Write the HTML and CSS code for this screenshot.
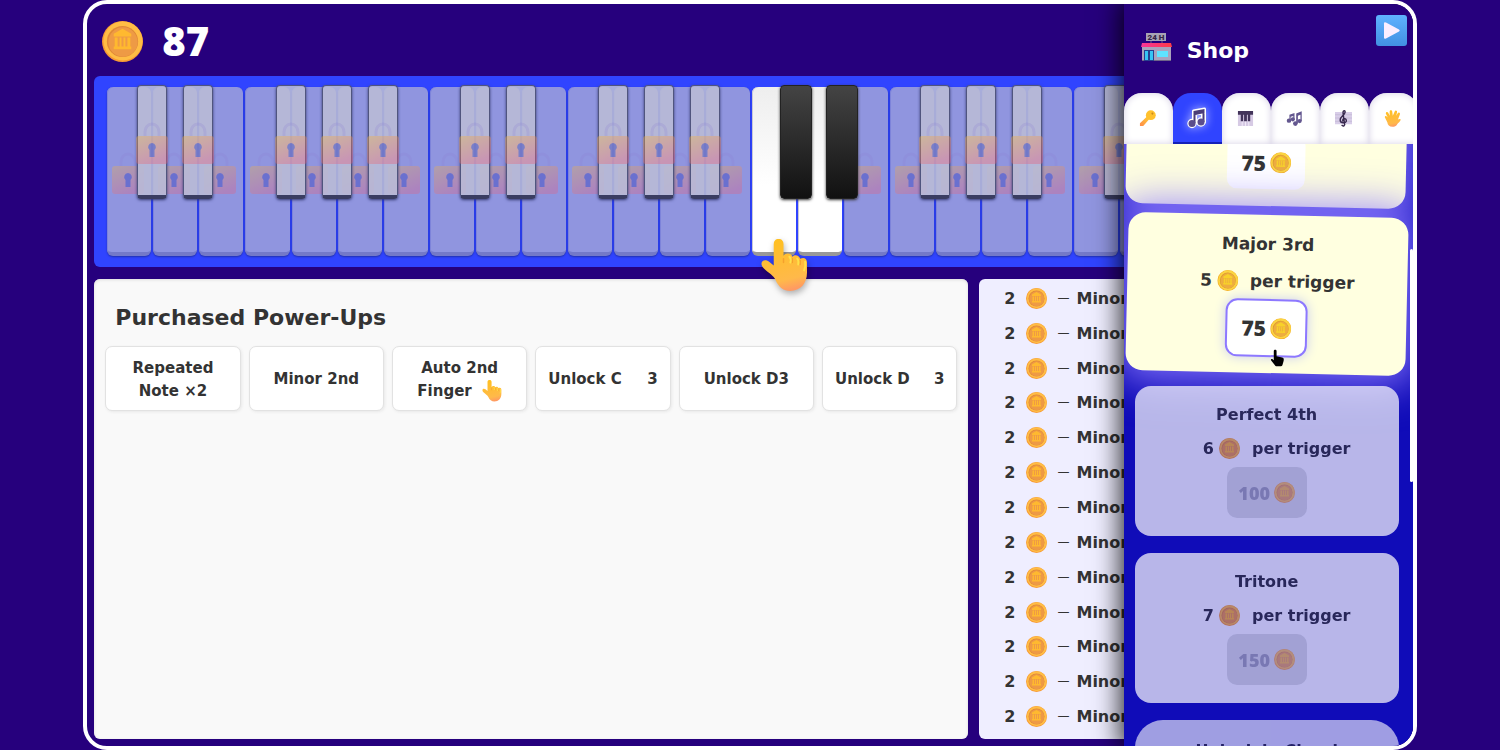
FILE: index.html
```html
<!DOCTYPE html>
<html lang="en">
<head>
<meta charset="utf-8">
<title>Piano Shop</title>
<link rel="stylesheet" href="styles.css">
</head>
<body>
<svg class="defs" aria-hidden="true">
  <defs>
    <linearGradient id="lockBody" x1="0" y1="0" x2="0.5" y2="1"><stop offset="0" stop-color="#f5b63d"/><stop offset="1" stop-color="#e8607e"/></linearGradient>
    <linearGradient id="skin" x1="0.3" y1="0" x2="0.5" y2="1"><stop offset="0" stop-color="#ffc020"/><stop offset="0.8" stop-color="#ffb94a"/><stop offset="1" stop-color="#ff9a62"/></linearGradient>
    <linearGradient id="keyMetal" x1="1" y1="0" x2="0" y2="1"><stop offset="0" stop-color="#ffd02e"/><stop offset="1" stop-color="#ff8a4d"/></linearGradient>
    <linearGradient id="roof" x1="0" y1="0" x2="1" y2="0"><stop offset="0" stop-color="#f8339a"/><stop offset="1" stop-color="#ff3b45"/></linearGradient>
    <linearGradient id="playBg" x1="0" y1="0" x2="0" y2="1"><stop offset="0" stop-color="#5fb2ff"/><stop offset="1" stop-color="#4290e2"/></linearGradient>
    <symbol id="coin" viewBox="0 0 42 42">
      <circle cx="21" cy="21" r="21" fill="#f79a35"/><circle cx="21.5" cy="20.5" r="20" fill="#ffbd45"/>
      <circle cx="21" cy="21" r="16" fill="#e08a38"/><circle cx="21.5" cy="21.5" r="15" fill="#ee9a45"/>
      <path fill="#ffb92f" d="M21 8 30 13V16H12V13ZM13 17h3v9h-3ZM18 17h2v9h-2ZM22 17h2v9h-2ZM26 17h3v9h-3ZM12 26h18v3H12Z"/>
    </symbol>
    <symbol id="lock" viewBox="0 0 32 42">
      <path d="M9 15V10a7 8 0 0 1 14 0v4" fill="none" stroke="#8b7bd0" stroke-opacity=".55" stroke-width="3"/>
      <rect y="14" width="32" height="28" rx="3" fill="url(#lockBody)"/>
      <path fill="#1b25b0" d="M16 21a4 4 0 0 1 2.500 7v7h-5v-7a4 4 0 0 1 2.500-7Z"/>
    </symbol>
    <symbol id="finger" viewBox="0 0 48 54">
      <path fill="url(#skin)" d="M13 5c0-7 10-7 10 0v12c2-3 8-3 9 1 3-3 7-1 8 2 4-2 7 0 7 4v10c0 12-7 19-17 19-7 0-12-4-15-11-2-5-7-7-12-12C-3 24 3 19 8 23l5 4Z"/>
      <path d="M23 20v4M32 20v4M40 22v4" stroke="#f5a12d" stroke-width="1.500" fill="none" stroke-linecap="round"/>
      <path d="M29 18q2 2 1 6M37 20q2 2 1 6M45 23q1 4-1 9" stroke="#ffe04a" stroke-width="2" fill="none" stroke-linecap="round"/>
    </symbol>
  </defs>
</svg>

<main class="frame">
  <section class="game">
    <header class="score">
      <svg class="score-coin"><use href="#coin"/></svg>
      <span class="score-value">87</span>
    </header>
    <div class="piano" id="piano"></div>
    <div class="panels">
      <section class="purchased">
        <h2 class="panel-title">Purchased Power-Ups</h2>
        <div class="tiles">
          <div class="tile">Repeated Note ×2</div>
          <div class="tile">Minor 2nd</div>
          <div class="tile"><span>Auto 2nd <span class="nowrap">Finger <svg class="tile-hand"><use href="#finger"/></svg></span></span></div>
          <div class="tile tile-wide"><span>Unlock C</span><span>3</span></div>
          <div class="tile">Unlock D3</div>
          <div class="tile tile-wide"><span>Unlock D</span><span>3</span></div>
        </div>
      </section>
      <ul class="history" id="history"></ul>
    </div>
  </section>

  <aside class="shop">
    <header class="shop-head">
      <svg class="shop-icon" viewBox="0 0 31 29">
        <path d="M10 8v3M21 8v3" stroke="#7a6088"/>
        <rect x="5" y="0" width="20" height="8" fill="#a7a3b5"/>
        <text x="15" y="7" class="sign">24 H</text>
        <rect x="1" y="13" width="29" height="15" fill="#a9a3bd"/>
        <path d="M1 27.500h29" stroke="#6f6488"/>
        <path d="M1 10h29l1 4H0Z" fill="url(#roof)"/>
        <rect x="3" y="17" width="10" height="11" fill="#26408f"/>
        <path d="M4 18h3v9H4ZM9 18h3v9H9Z" fill="#35c5f5"/>
        <rect x="16" y="18" width="11" height="6" fill="#5fe3ff"/>
      </svg>
      <h1 class="shop-title">Shop</h1>
      <button class="play" aria-label="Close shop">
        <svg viewBox="0 0 31 31"><rect width="31" height="31" rx="3" fill="url(#playBg)"/><path d="M8 8.500q0-2 2-1l13 7q1.500 1 0 2l-13 7q-2 1-2-1Z" fill="#fbeeff"/></svg>
      </button>
    </header>
    <nav class="tabs">
      <button class="tab" aria-label="Keys"><svg viewBox="0 0 18 18"><path d="m8.500 7 2.500 2.500L4.500 17H1v-3Z" fill="url(#keyMetal)"/><circle cx="12.500" cy="5.500" r="5.200" fill="#ffc12d"/><circle cx="14.200" cy="3.800" r="1.100" fill="#c98a1c"/></svg></button>
      <button class="tab tab-on" aria-label="Intervals"><svg viewBox="0 0 20 20"><g stroke="#fff" stroke-width="3" stroke-linejoin="round" fill="#fff"><path d="M6.500 3l11-2v3.500l-9 1.500v9h-2ZM15.500 2h2v12h-2Z"/><circle cx="5" cy="15.500" r="3.200"/><circle cx="14" cy="14" r="3.200"/></g><path fill="#4a3d78" d="M6.500 3l11-2v4l-9 2v8h-2ZM15.500 2h2v12h-2Z"/><circle cx="5" cy="15.500" r="3.500" fill="#5b4d8c"/><circle cx="14" cy="14" r="3.500" fill="#5b4d8c"/></svg></button>
      <button class="tab" aria-label="Piano"><svg viewBox="0 0 18 18"><path fill="#d6cae4" d="M1 2h16v15H1Z"/><path d="M5.500 11v6M9 11v6M12.500 11v6" stroke="#f2ecfa"/><path fill="#43345a" d="M1 1h16v4h-3v7h-2.500V5h-1v7h-3V5H6.500v7H4V5H1Z"/></svg></button>
      <button class="tab" aria-label="Melodies"><svg viewBox="0 0 20 20"><path fill="#63578f" d="M4 5.500 10 3.500V11H8.500V7L5.500 8v6H4ZM12 4 18.500 1.500V13H17V5.500l-3 1.200V16H12Z"/><circle cx="3.500" cy="12.500" r="2.600" fill="#63578f"/><circle cx="8" cy="11" r="2.400" fill="#63578f"/><circle cx="11" cy="16" r="2.700" fill="#63578f"/><circle cx="16" cy="13" r="2.500" fill="#63578f"/></svg></button>
      <button class="tab" aria-label="Score"><svg viewBox="0 0 18 18"><path fill="#d8cde8" d="M0 2h18v13H0Z"/><path d="M0 5h18M0 8.500h18M0 12h18" stroke="#c0b4d2" stroke-width=".7"/><path d="M7 16c2 2 4 0 3-2L8.500 3c0-3 3-3 2 0-1 3-5 4-5 7.500 0 4 7 4 6.500.5-.5-3-5-2-3.500 1" fill="none" stroke="#38294e" stroke-width="1.500"/></svg></button>
      <button class="tab" aria-label="Hands"><svg viewBox="0 0 18 18"><path fill="url(#skin)" d="M4 8 2 4c-.5-2 1.800-2.500 2.500-1L6 6V1.500C6-.3 8.500-.3 8.700 1.500L9.300 6l2-4.500c.8-1.700 3-.8 2.500 1L13 6l1.500-2.500c1-1.500 3-.5 2.300 1.200L14.800 10c1-.8 3.400-.8 2.700.8-1 2-2.500 2.700-3.500 4.200-1 2-3 2.700-5 2.700-3.500 0-5-1.700-5.500-4.700L1 8c-.6-1.600 1.300-2.400 2-1Z"/></svg></button>
    </nav>
    <div class="offers">
      <article class="card card-open card-first">
        <h3 class="card-name">Minor 3rd</h3>
        <p class="card-line">4 <svg class="coin coin-gold"><use href="#coin"/></svg><span>per trigger</span></p>
        <button class="price price-open">75 <svg class="coin coin-gold"><use href="#coin"/></svg></button>
      </article>
      <article class="card card-open">
        <h3 class="card-name">Major 3rd</h3>
        <p class="card-line">5 <svg class="coin coin-gold"><use href="#coin"/></svg><span>per trigger</span></p>
        <button class="price price-open price-hover">75 <svg class="coin coin-gold"><use href="#coin"/></svg></button>
      </article>
      <article class="card card-locked">
        <h3 class="card-name">Perfect 4th</h3>
        <p class="card-line">6 <svg class="coin"><use href="#coin"/></svg><span>per trigger</span></p>
        <button class="price" disabled>100 <svg class="coin"><use href="#coin"/></svg></button>
      </article>
      <article class="card card-locked">
        <h3 class="card-name">Tritone</h3>
        <p class="card-line">7 <svg class="coin"><use href="#coin"/></svg><span>per trigger</span></p>
        <button class="price" disabled>150 <svg class="coin"><use href="#coin"/></svg></button>
      </article>
      <article class="card card-dim">
        <h3 class="card-name">Unlock in Chord</h3>
      </article>
      <span class="thumb"></span>
    </div>
    <svg class="cursor" viewBox="0 0 14 18"><path d="M3 1.500c0-2 3-2 3 0V7l6 1.500c2 .5 2 2 1.500 4L12.500 16c-.5 1.500-1 2-3 2h-3C5 18 4.500 17.500 4 16.500L0 11.500c-.5-1.500 1-2 2-1l1 1Z"/></svg>
  </aside>
</main>
<script src="app.js"></script>
</body>
</html>
```
FILE: styles.css
```css
* { box-sizing: border-box; }
body {
  margin: 0;
  background: #26007d;
  color: #333;
  font: bold 16px/23px "DejaVu Sans", sans-serif;
}
h1, h2, h3, p, ul { margin: 0; padding: 0; font: inherit; }
button { font: inherit; color: inherit; border: 0; padding: 0; background: none; }
svg { display: block; flex: none; overflow: visible; }
.defs { position: absolute; width: 0; height: 0; }

.frame {
  position: relative;
  height: 100vh;
  aspect-ratio: 16 / 9;
  max-width: 100vw;
  margin: 0 auto;
  border: 4px solid #fff;
  border-radius: 24px;
  overflow: hidden;
}
.game { display: flex; flex-direction: column; height: 100%; padding: 0 7px 7px; }
.score { display: flex; align-items: center; gap: 19px; height: 72px; padding: 2px 8px 0; }
.score-coin { width: 41px; height: 41px; }
.score-value { color: #fff; font: 800 40px/40px "Open Sans", sans-serif; }

.piano { display: flex; gap: 2px; height: 191px; flex: none; padding: 11px 11px 11px 13px; background: #3044ff; border-radius: 6px; }
.key {
  position: relative;
  flex: 1;
  display: flex;
  justify-content: center;
  padding-top: 65px;
  border-radius: 6px;
  background: #9095df;
  border-bottom: 4px solid #7479c8;
  box-shadow: inset 1px 0 #7d83da, 0 1px 2px #2030b0;
}
.key-open { background: linear-gradient(#eee, #fff 60%); border-bottom-color: #999; box-shadow: inset 1px 0 #c9c9d4; }
.lock { width: 32px; height: 42px; margin-right: 3px; opacity: .32; }
.black {
  position: absolute;
  z-index: 1;
  top: -2px;
  right: -16px;
  width: 30px;
  height: 114px;
  padding-top: 36px;
  border: 1px solid #50557e;
  border-bottom: 4px solid #3a3d62;
  border-radius: 4px;
  background: rgba(186, 188, 214, .88);
  box-shadow: 0 1px 3px #333a70;
}
.black .lock { margin-left: -2px; opacity: .38; }
.black-open { width: 32px; background: linear-gradient(#444, #111); border: 1px solid #222; box-shadow: 0 1px 3px #333; }
.hand { position: absolute; z-index: 2; left: 9px; top: 152px; width: 47px; height: 53px; filter: drop-shadow(1px 3px 3px rgba(0, 0, 0, .3)); }

.panels { flex: 1; min-height: 0; display: grid; grid-template-columns: minmax(0, 205fr) minmax(0, 100fr); gap: 11px; padding-top: 12px; }
.purchased { background: #f9f9f9; border-radius: 6px; padding: 11px; box-shadow: inset 0 1px 3px #ddd; }
.panel-title { padding: 10px 10px 0; font-size: 22px; line-height: 36px; }
.tiles { display: grid; grid-template-columns: repeat(6, minmax(0, 1fr)); gap: 8px; margin-top: 10px; }
.tile {
  display: flex;
  align-items: center;
  justify-content: center;
  min-height: 65px;
  padding: 9px 6px 7px;
  text-align: center;
  font-size: 15px;
  background: #fff;
  border: 1px solid #e2e2e2;
  border-radius: 7px;
  box-shadow: 1px 1px 3px #e8e8e8;
}
.tile-wide { justify-content: space-between; padding: 9px 12px 7px; }
.nowrap { white-space: nowrap; }
.tile-hand { display: inline-block; vertical-align: middle; margin-left: 5px; width: 20px; height: 22px; }

.history { list-style: none; display: grid; grid-auto-rows: 1fr; padding: 2px 24px 5px 25px; background: #efeeff; border-radius: 6px; }
.history-row { display: flex; align-items: center; white-space: nowrap; }
.history-row .coin { margin: 0 10px 0 11px; }
.dash { margin-right: 7px; font-weight: normal; font-size: 12px; }
.coin { width: 21px; height: 21px; }

.shop {
  position: absolute;
  z-index: 5;
  top: 0;
  right: 0;
  width: 289px;
  height: 100%;
  display: flex;
  flex-direction: column;
  background: #26007d;
  box-shadow: 0 0 24px 4px rgba(0, 0, 0, .8);
}
.shop-head { display: flex; align-items: center; gap: 15px; height: 89px; flex: none; padding: 4px 6px 0 17px; }
.shop-icon { width: 31px; height: 29px; margin-bottom: 6px; }
.sign { font: 900 8px "Roboto", sans-serif; fill: #352448; text-anchor: middle; }
.shop-title { flex: 1; color: #fff; font-size: 22px; line-height: 28px; }
.play { align-self: flex-start; width: 31px; height: 31px; margin-top: 7px; }
.tabs { display: flex; height: 51px; flex: none; overflow: hidden; }
.tab { display: flex; align-items: center; justify-content: center; width: 49px; flex: none; border-radius: 18px 18px 0 0; background: #fff; box-shadow: inset 0 0 7px #d5d0e4; }
.tab svg { width: 17px; height: 17px; margin-right: 1px; }
.tab-on { background: #3044ff; border-bottom: 2px solid #1420b8; box-shadow: none; }
.tab-on svg { width: 20px; height: 20px; filter: drop-shadow(0 0 5px #b6bcff); }

.offers { position: relative; flex: 1; min-height: 0; overflow: hidden; display: flex; flex-direction: column; gap: 17px; padding: 0 14px 0 11px; background: #100cb8; }
.card { flex: none; display: flex; flex-direction: column; align-items: center; min-height: 150px; padding: 17px 0 16px; border-radius: 16px; background: #fff; }
.card-line { display: flex; align-items: center; gap: 5px; height: 24px; margin: 10px 0 7px; padding-left: 20px; }
.card-line span { margin-left: 7px; }
.card-open {
  min-height: 158px;
  margin: -4px -8px;
  padding: 18px 0 16px;
  font-size: 17px;
  background: #ffffe0;
  border-radius: 17px;
  transform: rotate(1.3deg);
  box-shadow: 0 0 40px 10px rgba(140, 122, 255, .9);
}
.card-open .card-line { margin: 13px 0 6px; }
.card-first { margin-top: -96px; }
.card-first .card-line { margin-bottom: 10px; }
.card-locked { position: relative; opacity: .7; }
.card-dim { position: relative; padding-top: 19px; opacity: .6; border-radius: 28px; }
.price { display: flex; align-items: center; justify-content: center; gap: 4px; height: 51px; min-width: 80px; padding: 0 10px; border-radius: 10px; background: #e1e1e1; color: #a6a6b2; font: 800 18px/24px "Open Sans", sans-serif; }
.price .coin { opacity: .8; }
.price-open { height: 53px; min-width: 78px; background: #fff; color: #333; font-size: 21px; }
.price-hover { height: 58px; min-width: 82px; border: 2px solid #8d78ff; border-radius: 12px; box-shadow: 0 0 12px #c8cdf0; }
.price-open .coin { opacity: 1; }
.coin-gold { filter: hue-rotate(10deg) brightness(1.08); }
.thumb { position: absolute; top: 105px; right: 0; width: 3px; height: 233px; background: #fff; border-radius: 2px; }
.cursor { position: absolute; top: 345px; left: 147px; width: 13px; height: 18px; }
```
FILE: app.js
```js
const lock = '<svg class="lock"><use href="#lock"/></svg>';
const hasBlack = [true, true, false, true, true, true, false];
const openKeys = [14, 15];
const handKey = 14;

let keys = '';
for (let i = 0; i < 28; i++) {
  const open = openKeys.includes(i);
  keys += `<div class="key${open ? ' key-open' : ''}">${open ? '' : lock}`;
  if (hasBlack[i % 7]) {
    keys += `<div class="black${open ? ' black-open' : ''}">${open ? '' : lock}</div>`;
  }
  if (i === handKey) keys += '<svg class="hand"><use href="#finger"/></svg>';
  keys += '</div>';
}
document.getElementById('piano').innerHTML = keys;

document.getElementById('history').innerHTML = Array.from({ length: 13 }, () =>
  '<li class="history-row">2<svg class="coin"><use href="#coin"/></svg><span class="dash">—</span>Minor 2nd</li>'
).join('');
```
